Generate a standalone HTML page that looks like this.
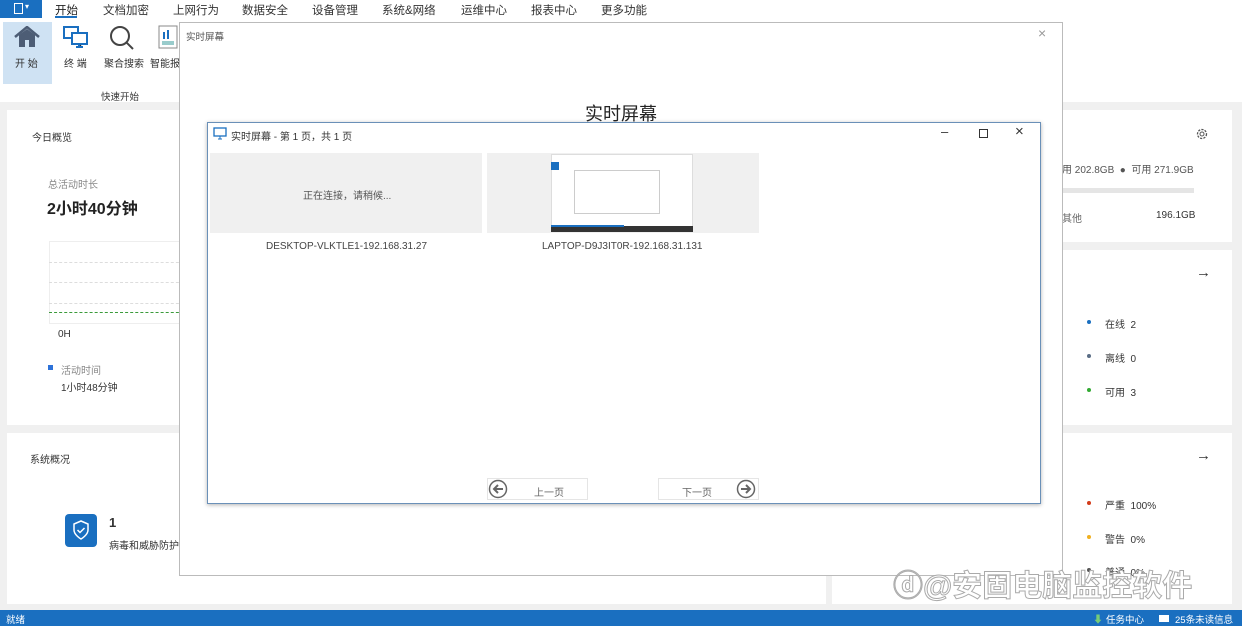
<!DOCTYPE html><html><head><meta charset="utf-8"><style>
*{margin:0;padding:0;box-sizing:border-box}
body{width:1242px;height:626px;position:relative;overflow:hidden;background:#f0f0f0;font-family:"Liberation Sans","Noto Sans CJK SC",sans-serif;font-size:10px;color:#333}
.a{position:absolute}
.card{position:absolute;background:#fff}
.t{position:absolute;white-space:nowrap}
</style></head><body>
<div class="a" style="left:0;top:0;width:1242px;height:102px;background:#fff"></div>
<div class="a" style="left:0;top:0;width:42px;height:18px;background:#1a6fc0"></div>
<div class="a" style="left:14px;top:3px;width:9px;height:11px;border:1.5px solid #fff"></div>
<div class="t" style="left:25px;top:2px;color:#fff;font-size:8px">▾</div>
<div class="t" style="left:55px;top:2px;font-size:11.5px;color:#222">开始</div>
<div class="a" style="left:55px;top:16px;width:22px;height:2px;background:#1a6fc0"></div>
<div class="t" style="left:103px;top:2px;font-size:11.5px">文档加密</div>
<div class="t" style="left:173px;top:2px;font-size:11.5px">上网行为</div>
<div class="t" style="left:242px;top:2px;font-size:11.5px">数据安全</div>
<div class="t" style="left:312px;top:2px;font-size:11.5px">设备管理</div>
<div class="t" style="left:382px;top:2px;font-size:11.5px">系统&amp;网络</div>
<div class="t" style="left:461px;top:2px;font-size:11.5px">运维中心</div>
<div class="t" style="left:531px;top:2px;font-size:11.5px">报表中心</div>
<div class="t" style="left:601px;top:2px;font-size:11.5px">更多功能</div>
<div class="a" style="left:3px;top:22px;width:49px;height:62px;background:#cfe2f3"></div>
<svg class="a" style="left:14px;top:26px" width="26" height="22"><path d="M1 11 L13 1 L25 11" fill="none" stroke="#4d5d75" stroke-width="2.5"/><path d="M5 9 L13 3 L21 9 V21 H15 V14 H11 V21 H5 Z" fill="#4d5d75"/></svg>
<div class="t" style="left:15px;top:55px">开 始</div>
<svg class="a" style="left:63px;top:26px" width="26" height="24"><rect x="1" y="1" width="14" height="11" fill="none" stroke="#1a6fc0" stroke-width="2"/><rect x="9" y="7" width="15" height="11" fill="#fff" stroke="#1a6fc0" stroke-width="2"/><path d="M16 18v3h-3h7" stroke="#1a6fc0" stroke-width="2"/></svg>
<div class="t" style="left:64px;top:55px">终 端</div>
<svg class="a" style="left:109px;top:25px" width="26" height="26"><circle cx="11" cy="11" r="9" fill="none" stroke="#444" stroke-width="2"/><path d="M17 17l7 7" stroke="#444" stroke-width="2"/></svg>
<div class="t" style="left:104px;top:55px">聚合搜索</div>
<svg class="a" style="left:158px;top:25px" width="22" height="24"><rect x="1" y="1" width="18" height="22" fill="#fff" stroke="#888"/><rect x="5" y="7" width="2" height="7" fill="#1a6fc0"/><rect x="9" y="5" width="2" height="9" fill="#1a6fc0"/><rect x="4" y="16" width="12" height="4" fill="#9cc"/></svg>
<div class="t" style="left:150px;top:55px">智能报</div>
<div class="t" style="left:101px;top:89px;font-size:9.5px">快速开始</div>

<div class="card" style="left:7px;top:110px;width:180px;height:315px"></div>
<div class="t" style="left:32px;top:129px">今日概览</div>
<div class="t" style="left:48px;top:176px;color:#888">总活动时长</div>
<div class="t" style="left:47px;top:195px;font-size:16px;font-weight:bold;color:#222">2小时40分钟</div>
<div class="a" style="left:49px;top:241px;width:140px;height:83px;border:1px solid #eee"></div>
<div class="a" style="left:49px;top:262px;width:140px;border-top:1px dashed #ddd"></div>
<div class="a" style="left:49px;top:282px;width:140px;border-top:1px dashed #ddd"></div>
<div class="a" style="left:49px;top:303px;width:140px;border-top:1px dashed #ddd"></div>
<div class="a" style="left:49px;top:312px;width:140px;border-top:1px dashed #3a9a3a"></div>
<div class="t" style="left:58px;top:329px">0H</div>
<div class="a" style="left:48px;top:365px;width:5px;height:5px;background:#2d72d9"></div>
<div class="t" style="left:61px;top:362px;color:#888">活动时间</div>
<div class="t" style="left:61px;top:379px">1小时48分钟</div>

<div class="card" style="left:7px;top:433px;width:819px;height:171px"></div>
<div class="t" style="left:30px;top:451px">系统概况</div>
<div class="a" style="left:65px;top:514px;width:32px;height:33px;background:#1a6fc0;border-radius:4px"></div>
<svg class="a" style="left:72px;top:520px" width="18" height="20"><path d="M9 1L16 4V10C16 15 9 19 9 19C9 19 2 15 2 10V4Z" fill="none" stroke="#fff" stroke-width="1.5"/><path d="M5.5 10l2.5 2.5 4.5-4.5" fill="none" stroke="#fff" stroke-width="1.5"/></svg>
<div class="t" style="left:109px;top:515px;font-size:13px;font-weight:bold">1</div>
<div class="t" style="left:109px;top:537px">病毒和威胁防护</div>

<div class="card" style="left:832px;top:110px;width:400px;height:132px"></div>
<svg class="a" style="left:1195px;top:127px" width="14" height="14"><circle cx="7" cy="7" r="4.5" fill="none" stroke="#555" stroke-width="1.3" stroke-dasharray="2.2 1.2"/><circle cx="7" cy="7" r="2" fill="none" stroke="#555"/></svg>
<div class="t" style="left:1062px;top:161px;color:#555">用 202.8GB &nbsp;●&nbsp; 可用 271.9GB</div>
<div class="a" style="left:1062px;top:188px;width:132px;height:5px;background:#e5e5e5"></div>
<div class="t" style="left:1062px;top:210px;color:#666">其他</div>
<div class="t" style="left:1156px;top:210px">196.1GB</div>
<div class="card" style="left:832px;top:250px;width:400px;height:175px"></div>
<div class="t" style="left:1196px;top:264px;font-size:15px">→</div>
<div class="a" style="left:1087px;top:320px;width:4px;height:4px;border-radius:50%;background:#1a6fc0"></div><div class="t" style="left:1105px;top:316px">在线 &nbsp;2</div>
<div class="a" style="left:1087px;top:354px;width:4px;height:4px;border-radius:50%;background:#5a6d85"></div><div class="t" style="left:1105px;top:350px">离线 &nbsp;0</div>
<div class="a" style="left:1087px;top:388px;width:4px;height:4px;border-radius:50%;background:#3a3"></div><div class="t" style="left:1105px;top:384px">可用 &nbsp;3</div>
<div class="card" style="left:832px;top:433px;width:400px;height:171px"></div>
<div class="t" style="left:1196px;top:447px;font-size:15px">→</div>
<div class="a" style="left:1087px;top:501px;width:4px;height:4px;border-radius:50%;background:#d33c1a"></div><div class="t" style="left:1105px;top:497px">严重 &nbsp;100%</div>
<div class="a" style="left:1087px;top:535px;width:4px;height:4px;border-radius:50%;background:#f0b020"></div><div class="t" style="left:1105px;top:531px">警告 &nbsp;0%</div>
<div class="a" style="left:1087px;top:568px;width:4px;height:4px;border-radius:50%;background:#555"></div><div class="t" style="left:1105px;top:564px">普通 &nbsp;0%</div>

<div class="a" style="left:179px;top:22px;width:884px;height:554px;background:#fff;border:1px solid #bbb"></div>
<div class="t" style="left:186px;top:29px;font-size:9.5px;color:#555">实时屏幕</div>
<div class="t" style="left:1038px;top:25px;font-size:14px;color:#999">×</div>
<div class="t" style="left:585px;top:100px;font-size:18px;color:#222">实时屏幕</div>

<div class="a" style="left:207px;top:122px;width:834px;height:382px;background:#fff;border:1px solid #6a90b8;box-shadow:0 1px 4px rgba(0,0,0,.3)"></div>
<svg class="a" style="left:213px;top:127px" width="14" height="13"><rect x="1" y="1" width="12" height="8" fill="none" stroke="#1a6fc0" stroke-width="1.3"/><path d="M5 12h4M7 9v3" stroke="#1a6fc0"/></svg>
<div class="t" style="left:231px;top:128px">实时屏幕 - 第 1 页，共 1 页</div>
<div class="t" style="left:941px;top:124px;font-size:13px">–</div>
<div class="a" style="left:979px;top:129px;width:9px;height:9px;border:1px solid #333"></div>
<div class="t" style="left:1015px;top:123px;font-size:15px">×</div>
<div class="a" style="left:210px;top:153px;width:272px;height:80px;background:#f0f0f0"></div>
<div class="t" style="left:303px;top:187px;color:#555">正在连接，请稍候...</div>
<div class="t" style="left:266px;top:241px;color:#444">DESKTOP-VLKTLE1-192.168.31.27</div>
<div class="a" style="left:487px;top:153px;width:272px;height:80px;background:#f0f0f0"></div>
<div class="a" style="left:551px;top:154px;width:142px;height:78px;background:#fff;border:1px solid #ddd"></div>
<div class="a" style="left:551px;top:162px;width:8px;height:8px;background:#1a6fc0"></div>
<div class="a" style="left:574px;top:170px;width:86px;height:44px;border:1px solid #ccc"></div>
<div class="a" style="left:551px;top:226px;width:142px;height:6px;background:#333"></div>
<div class="a" style="left:551px;top:225px;width:73px;height:2px;background:#1a6fc0"></div>
<div class="t" style="left:542px;top:241px;color:#444">LAPTOP-D9J3IT0R-192.168.31.131</div>
<div class="a" style="left:487px;top:478px;width:101px;height:22px;border:1px solid #e5e5e5"></div>
<div class="t" style="left:534px;top:484px;color:#666">上一页</div>
<div class="a" style="left:658px;top:478px;width:101px;height:22px;border:1px solid #e5e5e5"></div>
<div class="t" style="left:682px;top:484px;color:#666">下一页</div>
<svg class="a" style="left:736px;top:479px" width="20" height="20"><circle cx="10" cy="10" r="8.5" fill="none" stroke="#666" stroke-width="1.5"/><path d="M5 10h9M10 6l4 4-4 4" fill="none" stroke="#666" stroke-width="2"/></svg>
<svg class="a" style="left:488px;top:479px" width="20" height="20"><circle cx="10" cy="10" r="8.5" fill="none" stroke="#666" stroke-width="1.5"/><path d="M15 10H6M10 6l-4 4 4 4" fill="none" stroke="#666" stroke-width="2"/></svg>

<div class="t" style="left:893px;top:561px;font-size:30px;color:#fff;-webkit-text-stroke:1px #aaa;font-weight:bold">ⓓ@安固电脑监控软件</div>

<div class="a" style="left:0;top:610px;width:1242px;height:16px;background:#1a6fc0"></div>
<div class="t" style="left:6px;top:612px;color:#fff;font-size:9.5px">就绪</div>
<div class="t" style="left:1093px;top:611px;color:#7c7;font-size:10px">⬇</div>
<div class="t" style="left:1106px;top:612px;color:#fff;font-size:9.5px">任务中心</div>
<div class="a" style="left:1159px;top:615px;width:10px;height:7px;background:#fff"></div>
<div class="t" style="left:1175px;top:612px;color:#fff;font-size:9.5px">25条未读信息</div>
</body></html>
